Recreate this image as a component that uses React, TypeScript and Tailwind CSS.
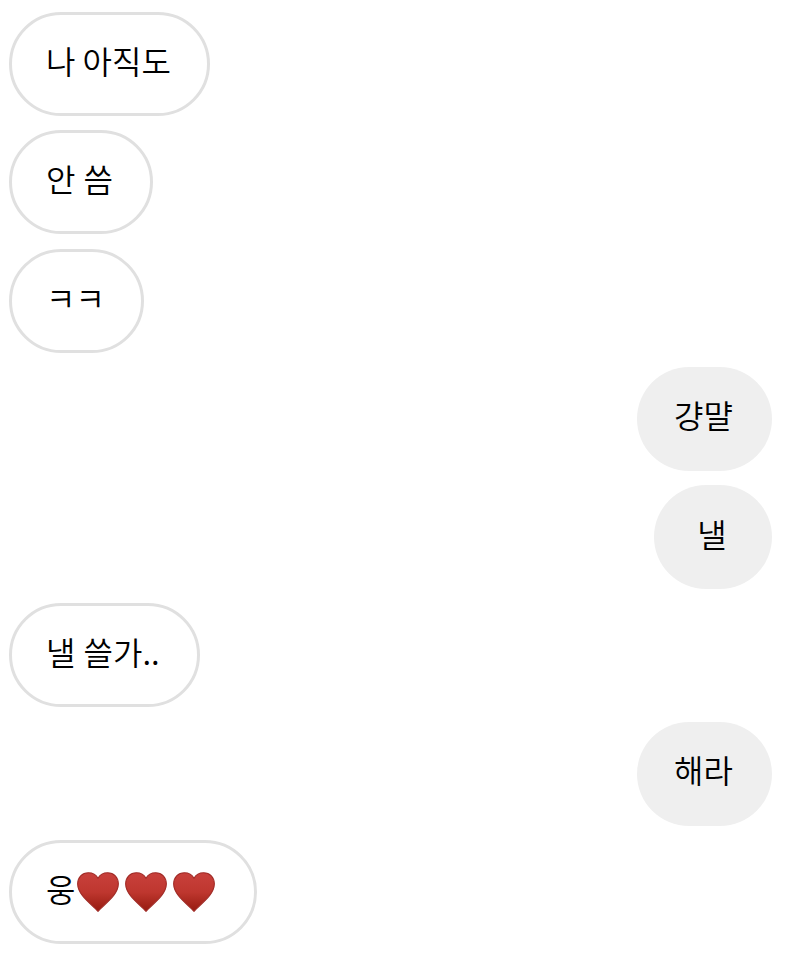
const font = { fontFamily: '"Noto Sans CJK KR", sans-serif', fontWeight: 350 };

function Heart() {
  return (
    <svg viewBox="0 0 40 38" className="w-[42px] h-[40px] shrink-0">
      <defs>
        <linearGradient id="heartFill" x1="0" y1="0" x2="0" y2="1">
          <stop offset="0" stopColor="#c8403c" />
          <stop offset="0.5" stopColor="#bf372f" />
          <stop offset="1" stopColor="#961a10" />
        </linearGradient>
      </defs>
      <path
        d="M20 37.4C14 30.5 .6 22 .6 11.2 .6 5 5 .6 10.8 .6c4.2 0 7.4 1.9 9.2 5.4C21.8 2.5 25 .6 29.2 .6 35 .6 39.4 5 39.4 11.2 39.4 22 26 30.5 20 37.4z"
        fill="url(#heartFill)"
        stroke="#a02a25"
        strokeWidth="1"
        strokeLinejoin="round"
      />
    </svg>
  );
}

function Left({ children, className = "" }: { children: React.ReactNode; className?: string }) {
  return (
    <div className={`self-start h-[104px] rounded-[52px] border-[3px] border-[#e0e0e0] bg-white pl-[34px] pr-[36px] flex items-center pb-[8px] text-[32px] leading-none text-black whitespace-pre ${className}`} style={font}>
      {children}
    </div>
  );
}

function Right({ children }: { children: React.ReactNode }) {
  return (
    <div className="self-end h-[104px] min-w-[118px] justify-center rounded-[52px] bg-[#efefef] pl-[37px] pr-[39px] flex items-center pb-[9px] text-[32px] leading-none text-black whitespace-pre" style={font}>
      {children}
    </div>
  );
}

export default function App() {
  return (
    <div className="w-[800px] h-[955px] bg-white overflow-hidden flex flex-col gap-[14.3px] pt-[12px] pl-[9px] pr-[28px]">
      <Left>나 아직도</Left>
      <Left className="[word-spacing:1px] min-w-[143.5px]">안 씀</Left>
      <Left>ㅋㅋ</Left>
      <Right>걍먈</Right>
      <Right>낼</Right>
      <Left className="[word-spacing:1px] min-w-[191px]">낼 쓸가..</Left>
      <Right>해라</Right>
      <Left className="min-w-[248px]">
        <span>웅</span>
        <span className="flex gap-[5.6px] mt-[8px] ml-[2px]"><Heart /><Heart /><Heart /></span>
      </Left>
    </div>
  );
}
